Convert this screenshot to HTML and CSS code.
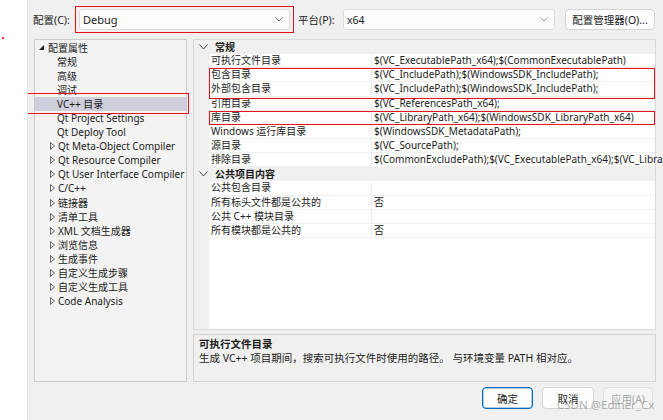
FILE: index.html
```html
<!DOCTYPE html>
<html lang="zh-CN">
<head>
<meta charset="utf-8">
<title>VC++ 目录</title>
<link rel="stylesheet" href="styles.css">
</head>
<body>
<div class="strip"><span class="dot"></span></div>
<div class="dialog">
  <div class="topbar">
    <span class="lbl lbl-cfg">配置(C):</span>
    <div class="combo combo-cfg marked"><span>Debug</span>
      <svg class="chev" width="8" height="5" viewBox="0 0 8 5"><path d="M0.5 0.5 L4 4 L7.5 0.5" fill="none" stroke="#777" stroke-width="1"/></svg>
    </div>
    <span class="lbl lbl-plat">平台(P):</span>
    <div class="combo combo-plat"><span>x64</span>
      <svg class="chev" width="8" height="5" viewBox="0 0 8 5"><path d="M0.5 0.5 L4 4 L7.5 0.5" fill="none" stroke="#999" stroke-width="1"/></svg>
    </div>
    <button class="btn btn-mgr">配置管理器(O)...</button>
  </div>

  <div class="main">
    <div class="tree">
      <div class="node root"><svg class="exp" width="5" height="5" viewBox="0 0 5 5"><path d="M5 0 L5 5 L0 5 Z" fill="#222"/></svg>配置属性</div>
      <div class="node leaf">常规</div>
      <div class="node leaf">高级</div>
      <div class="node leaf">调试</div>
      <div class="node leaf sel">VC++ 目录</div>
      <div class="node leaf">Qt Project Settings</div>
      <div class="node leaf">Qt Deploy Tool</div>
      <div class="node coll"><svg class="tri" width="5" height="8" viewBox="0 0 5 8"><path d="M0.5 0.5 L4.5 4 L0.5 7.5 Z" fill="none" stroke="#555" stroke-width="0.9"/></svg>Qt Meta-Object Compiler</div>
      <div class="node coll"><svg class="tri" width="5" height="8" viewBox="0 0 5 8"><path d="M0.5 0.5 L4.5 4 L0.5 7.5 Z" fill="none" stroke="#555" stroke-width="0.9"/></svg>Qt Resource Compiler</div>
      <div class="node coll"><svg class="tri" width="5" height="8" viewBox="0 0 5 8"><path d="M0.5 0.5 L4.5 4 L0.5 7.5 Z" fill="none" stroke="#555" stroke-width="0.9"/></svg>Qt User Interface Compiler</div>
      <div class="node coll"><svg class="tri" width="5" height="8" viewBox="0 0 5 8"><path d="M0.5 0.5 L4.5 4 L0.5 7.5 Z" fill="none" stroke="#555" stroke-width="0.9"/></svg>C/C++</div>
      <div class="node coll"><svg class="tri" width="5" height="8" viewBox="0 0 5 8"><path d="M0.5 0.5 L4.5 4 L0.5 7.5 Z" fill="none" stroke="#555" stroke-width="0.9"/></svg>链接器</div>
      <div class="node coll"><svg class="tri" width="5" height="8" viewBox="0 0 5 8"><path d="M0.5 0.5 L4.5 4 L0.5 7.5 Z" fill="none" stroke="#555" stroke-width="0.9"/></svg>清单工具</div>
      <div class="node coll"><svg class="tri" width="5" height="8" viewBox="0 0 5 8"><path d="M0.5 0.5 L4.5 4 L0.5 7.5 Z" fill="none" stroke="#555" stroke-width="0.9"/></svg>XML 文档生成器</div>
      <div class="node coll"><svg class="tri" width="5" height="8" viewBox="0 0 5 8"><path d="M0.5 0.5 L4.5 4 L0.5 7.5 Z" fill="none" stroke="#555" stroke-width="0.9"/></svg>浏览信息</div>
      <div class="node coll"><svg class="tri" width="5" height="8" viewBox="0 0 5 8"><path d="M0.5 0.5 L4.5 4 L0.5 7.5 Z" fill="none" stroke="#555" stroke-width="0.9"/></svg>生成事件</div>
      <div class="node coll"><svg class="tri" width="5" height="8" viewBox="0 0 5 8"><path d="M0.5 0.5 L4.5 4 L0.5 7.5 Z" fill="none" stroke="#555" stroke-width="0.9"/></svg>自定义生成步骤</div>
      <div class="node coll"><svg class="tri" width="5" height="8" viewBox="0 0 5 8"><path d="M0.5 0.5 L4.5 4 L0.5 7.5 Z" fill="none" stroke="#555" stroke-width="0.9"/></svg>自定义生成工具</div>
      <div class="node coll"><svg class="tri" width="5" height="8" viewBox="0 0 5 8"><path d="M0.5 0.5 L4.5 4 L0.5 7.5 Z" fill="none" stroke="#555" stroke-width="0.9"/></svg>Code Analysis</div>
    </div>

    <div class="right">
      <div class="grid">
        <div class="cat"><svg class="cchev" width="9" height="6" viewBox="0 0 9 6"><path d="M0.5 0.5 L4.5 5 L8.5 0.5" fill="none" stroke="#444" stroke-width="1"/></svg><b>常规</b></div>
        <div class="row"><span class="name">可执行文件目录</span><span class="val">$(VC_ExecutablePath_x64);$(CommonExecutablePath)</span></div>
        <div class="row mark2"><span class="name">包含目录</span><span class="val">$(VC_IncludePath);$(WindowsSDK_IncludePath);</span></div>
        <div class="row"><span class="name">外部包含目录</span><span class="val">$(VC_IncludePath);$(WindowsSDK_IncludePath);</span></div>
        <div class="row"><span class="name">引用目录</span><span class="val">$(VC_ReferencesPath_x64);</span></div>
        <div class="row mark1"><span class="name">库目录</span><span class="val">$(VC_LibraryPath_x64);$(WindowsSDK_LibraryPath_x64)</span></div>
        <div class="row"><span class="name">Windows 运行库目录</span><span class="val">$(WindowsSDK_MetadataPath);</span></div>
        <div class="row"><span class="name">源目录</span><span class="val">$(VC_SourcePath);</span></div>
        <div class="row"><span class="name">排除目录</span><span class="val">$(CommonExcludePath);$(VC_ExecutablePath_x64);$(VC_LibraryPath_x64)</span></div>
        <div class="cat"><svg class="cchev" width="9" height="6" viewBox="0 0 9 6"><path d="M0.5 0.5 L4.5 5 L8.5 0.5" fill="none" stroke="#444" stroke-width="1"/></svg><b>公共项目内容</b></div>
        <div class="row"><span class="name">公共包含目录</span><span class="val"></span></div>
        <div class="row"><span class="name">所有标头文件都是公共的</span><span class="val">否</span></div>
        <div class="row"><span class="name">公共 C++ 模块目录</span><span class="val"></span></div>
        <div class="row"><span class="name">所有模块都是公共的</span><span class="val">否</span></div>
      </div>
      <div class="desc">
        <div class="desc-title">可执行文件目录</div>
        <div class="desc-text">生成 VC++ 项目期间，搜索可执行文件时使用的路径。 与环境变量 PATH 相对应。</div>
      </div>
    </div>
  </div>

  <div class="buttons">
    <button class="btn btn-ok">确定</button>
    <button class="btn btn-cancel">取消</button>
    <button class="btn btn-apply">应用(A)</button>
    <span class="watermark">CSDN @Ediner_Cx</span>
  </div>
</div>
</body>
</html>
```

FILE: styles.css
```css
* { box-sizing: border-box; }
html, body { margin: 0; padding: 0; }
body {
  width: 663px;
  height: 420px;
  overflow: hidden;
  display: flex;
  background: #ffffff;
  font-family: "Noto Sans", "Noto Sans CJK SC", sans-serif;
  font-size: 10.5px;
  color: #1b1b1b;
}
.strip {
  width: 27px;
  flex: none;
  background: #ffffff;
  padding: 37px 0 0 2px;
}
.dot {
  display: block;
  width: 2px;
  height: 2px;
  background: #e03030;
}
.dialog {
  flex: 1;
  background: #f0f0f0;
  border-left: 1px solid #e6e6e6;
  display: flex;
  flex-direction: column;
  position: relative;
  overflow: hidden;
}
.topbar {
  height: 39px;
  display: flex;
  align-items: center;
  padding: 0 0 0 5px;
}
.lbl { white-space: nowrap; }
.lbl-cfg { width: 46px; }
.lbl-plat { width: 45px; margin-left: 8px; }
.combo {
  height: 21px;
  background: #fdfdfd;
  border: 1px solid #dcdcdc;
  border-radius: 3px;
  display: flex;
  align-items: center;
  justify-content: space-between;
  padding: 0 6px 0 3px;
  position: relative;
}
.combo-cfg { width: 211px; font-size: 11px; }
.combo-plat { width: 212px; font-size: 10.5px; padding-left: 3px; }
.chev { flex: none; }
.marked::after {
  content: "";
  position: absolute;
  left: -5px; right: -5px; top: -4px; bottom: -4px;
  border: 1.5px solid #e8101c;
}
.btn {
  font-family: inherit;
  font-size: 10.5px;
  color: #1b1b1b;
  background: #fdfdfd;
  border: 1px solid #d3d3d3;
  border-radius: 4px;
  height: 22px;
  padding: 0;
}
.btn-mgr { width: 90px; margin-left: 10px; height: 21px; }

.main {
  display: flex;
  height: 343px;
  padding-left: 6px;
  gap: 6px;
}
.tree {
  width: 153px;
  flex: none;
  background: #f3f3f3;
  border: 1.5px solid #cbcbcb;
  padding-top: 0.5px;
  font-size: 10px;
}
.node {
  height: 14.1px;
  line-height: 14.1px;
  white-space: nowrap;
  position: relative;
  display: flex;
  align-items: center;
}
.node svg { flex: none; }
.root { padding-left: 4px; }
.exp { margin-right: 4px; margin-top: -1px; }
.leaf { padding-left: 22px; }
.coll { padding-left: 15px; }
.tri { margin-right: 3px; }
.sel { background: #cfcfdb; }
.sel::after {
  content: "";
  position: absolute;
  left: -9px; right: -3px; top: -4px; bottom: -3px;
  border: 1.5px solid #e8101c;
}

.right {
  flex: 1;
  display: flex;
  flex-direction: column;
  gap: 4px;
  min-width: 0;
  padding-right: 7px;
}
.grid {
  height: 291px;
  background: #ffffff;
  border: 1px solid #d9d9d9;
  padding-left: 15px;
  background-image: linear-gradient(#f0f0f0, #f0f0f0);
  background-size: 15px 100%;
  background-repeat: no-repeat;
  font-size: 10px;
}
.cat {
  height: 14.15px;
  line-height: 14.15px;
  margin-left: -15px;
  background: #f0f0f0;
  display: flex;
  align-items: center;
  padding-left: 5px;
  white-space: nowrap;
}
.cchev { margin-right: 7px; flex: none; }
.cat b { font-weight: 700; }
.row {
  height: 14.15px;
  line-height: 13.15px;
  display: grid;
  grid-template-columns: 163px 1fr;
  border-bottom: 1px solid #f0f0f0;
  white-space: nowrap;
  position: relative;
  background: #ffffff;
}
.name {
  padding-left: 2px;
  border-right: 1px solid #ededed;
  overflow: hidden;
}
.val { padding-left: 2px; overflow: visible; }
.mark2 { z-index: 2; }
.mark1 { z-index: 2; }
.mark2::after, .mark1::after {
  content: "";
  position: absolute;
  left: 0; right: 0;
  border: 1.5px solid #e8101c;
  pointer-events: none;
}
.mark2::after { top: 0; height: 28.3px; }
.mark1::after { top: 0; bottom: -1px; }

.desc {
  flex: 1;
  background: #f0f0f0;
  border: 1.5px solid #d3d3d3;
  padding: 2px 5px;
  line-height: 14px;
}
.desc-title { font-weight: 700; }

.buttons {
  display: flex;
  align-items: center;
  padding: 5px 0 0 454px;
  gap: 9px;
  position: relative;
}
.btn-ok { width: 51px; border-color: #0067c0; box-shadow: inset 0 0 0 0.5px #5a9bd6; }
.btn-cancel { width: 52px; }
.btn-apply { width: 50px; color: #a8a8a8; background: #f5f5f5; border-color: #e0e0e0; }
.watermark {
  position: absolute;
  left: 529px;
  top: 15px;
  font-size: 11.5px;
  color: rgba(140, 140, 140, 0.7);
  white-space: nowrap;
}
```
